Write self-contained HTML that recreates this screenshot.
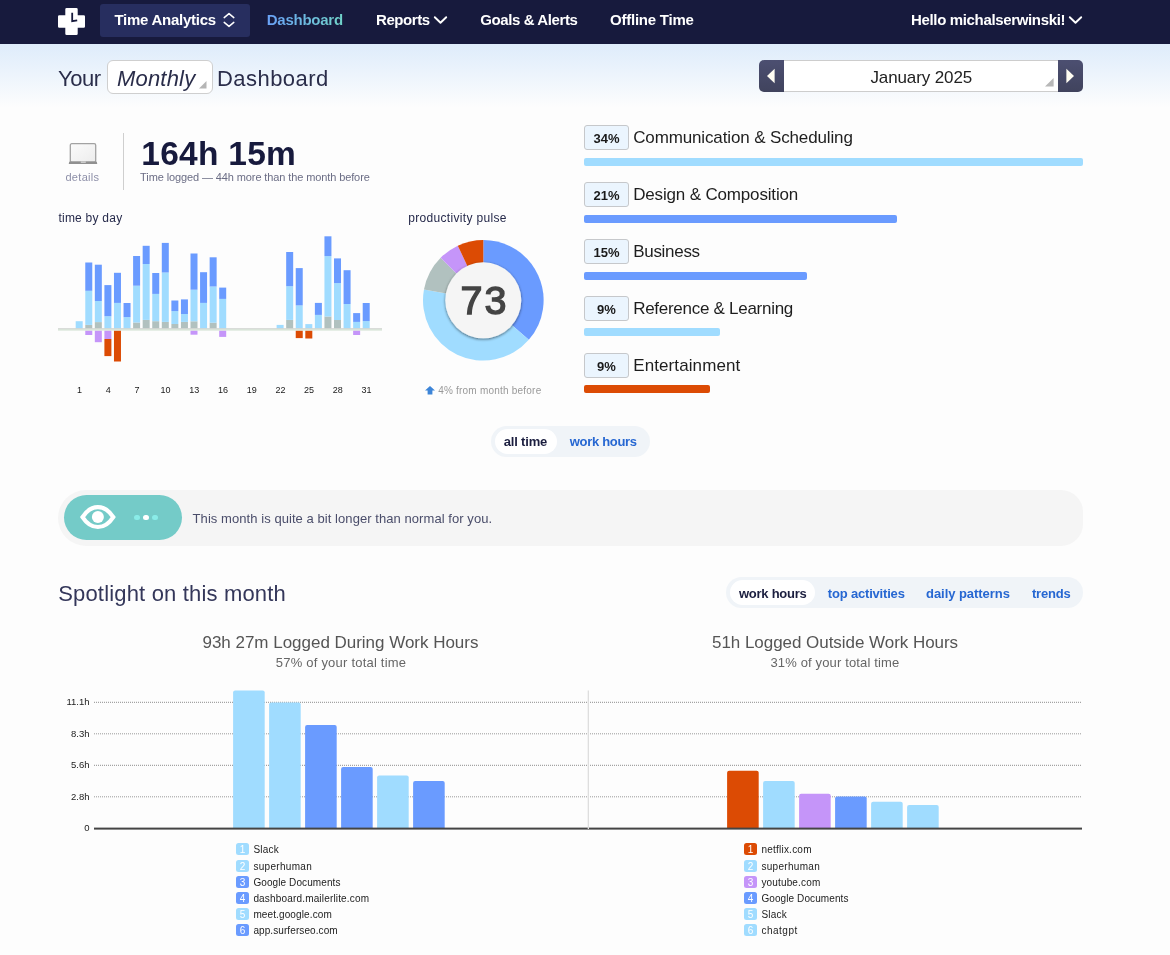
<!DOCTYPE html>
<html><head><meta charset="utf-8"><title>Dashboard</title>
<style>
html,body{margin:0;padding:0;}
body{width:1170px;height:955px;position:relative;overflow:hidden;background:#fdfdfd;font-family:"Liberation Sans",sans-serif;}
.t{position:absolute;white-space:nowrap;line-height:1;font-family:"Liberation Sans",sans-serif;}
.a{position:absolute;}
</style></head><body>

<div class="a" style="left:0;top:44px;width:1170px;height:64px;background:linear-gradient(180deg,#deecfb 0%,#fdfdfd 100%);"></div>
<div class="a" style="left:0;top:0;width:1170px;height:44px;background:#171a3d;"></div>
<div class="a" style="left:100px;top:4px;width:150px;height:33px;background:#272e5f;border-radius:3px;"></div>
<svg class="a" style="left:58px;top:8px" width="27" height="27" viewBox="0 0 27 27">
<path d="M8.6 0h9.8a1.3 1.3 0 0 1 1.3 1.3V7.3h6a1.3 1.3 0 0 1 1.3 1.3v9.8a1.3 1.3 0 0 1-1.3 1.3h-6v6a1.3 1.3 0 0 1-1.3 1.3H8.6a1.3 1.3 0 0 1-1.3-1.3v-6H1.3A1.3 1.3 0 0 1 0 18.4V8.6A1.3 1.3 0 0 1 1.3 7.3h6V1.3A1.3 1.3 0 0 1 8.6 0z" fill="#fff"/>
<path d="M14.2 4.7v8.5l5-.8" fill="none" stroke="#171a3d" stroke-width="1.8"/>
</svg>
<svg class="a" style="left:222px;top:12px" width="14" height="16" viewBox="0 0 14 16"><path d="M2.2 5.6L7 1.6l4.8 4M2.2 10.4L7 14.4l4.8-4" fill="none" stroke="#fff" stroke-width="1.5" stroke-linecap="round" stroke-linejoin="round"/></svg>
<svg class="a" style="left:433px;top:14px" width="15" height="12" viewBox="0 0 15 12"><path d="M1.8 3.2L7.5 8.8l5.7-5.6" fill="none" stroke="#fff" stroke-width="1.9" stroke-linecap="round" stroke-linejoin="round"/></svg>
<svg class="a" style="left:1068px;top:14px" width="15" height="12" viewBox="0 0 15 12"><path d="M1.8 3.2L7.5 8.8l5.7-5.6" fill="none" stroke="#fff" stroke-width="1.9" stroke-linecap="round" stroke-linejoin="round"/></svg>
<div class="a" style="left:107px;top:60px;width:106px;height:34px;box-sizing:border-box;border:1px solid #cfcfcf;border-radius:6px;background:#fff;"></div>
<svg class="a" style="left:199px;top:81px" width="8" height="8" viewBox="0 0 8 8"><path d="M7.5 0V7.5H0z" fill="#b5b5b5"/></svg>
<div class="a" style="left:759px;top:60px;width:324px;height:32px;border-radius:5px;background:linear-gradient(180deg,#4c4f71,#40435d);"></div>
<div class="a" style="left:784px;top:60px;width:274px;height:32px;box-sizing:border-box;border-top:1px solid #cdcdcd;border-bottom:1px solid #cdcdcd;background:#fff;"></div>
<svg class="a" style="left:766px;top:68px" width="10" height="16" viewBox="0 0 10 16"><path d="M8.6 0.8V15.2L1 8z" fill="#fffdf2"/></svg>
<svg class="a" style="left:1065px;top:68px" width="10" height="16" viewBox="0 0 10 16"><path d="M1.4 0.8V15.2L9 8z" fill="#fffdf2"/></svg>
<svg class="a" style="left:1045px;top:78px" width="9" height="9" viewBox="0 0 9 9"><path d="M8.6 0V8.6H0z" fill="#b8b8b8"/></svg>
<svg class="a" style="left:68px;top:142px" width="30" height="23" viewBox="0 0 30 23">
<defs><linearGradient id="lg1" x1="0" y1="0" x2="1" y2="1"><stop offset="0" stop-color="#fbfbfb"/><stop offset="1" stop-color="#ececec"/></linearGradient></defs>
<rect x="2.3" y="1.7" width="25.4" height="18.4" rx="1.5" fill="url(#lg1)" stroke="#a2a2a2" stroke-width="1.3"/>
<path d="M1.3 19.5h27.4l.5 2a.5.5 0 0 1-.5.6H1.3a.5.5 0 0 1-.5-.6z" fill="#909090"/>
<rect x="12.8" y="19.6" width="5" height="1.1" fill="#e4e4e4"/>
</svg>
<div class="a" style="left:123px;top:133px;width:1px;height:57px;background:#cfcfcf;"></div>
<svg class="a" style="left:50px;top:225px" width="350" height="150" viewBox="50 225 350 150" shape-rendering="auto">
<rect x="75.70" y="321.20" width="7" height="7.20" fill="#a0dcff"/>
<rect x="85.27" y="324.90" width="7" height="3.50" fill="#b1c1bf"/>
<rect x="85.27" y="290.80" width="7" height="34.10" fill="#a0dcff"/>
<rect x="85.27" y="262.50" width="7" height="28.30" fill="#6a9bff"/>
<rect x="85.27" y="330.60" width="7" height="4.40" fill="#c595f9"/>
<rect x="94.83" y="322.10" width="7" height="6.30" fill="#b1c1bf"/>
<rect x="94.83" y="301.00" width="7" height="21.10" fill="#a0dcff"/>
<rect x="94.83" y="264.70" width="7" height="36.30" fill="#6a9bff"/>
<rect x="94.83" y="330.60" width="7" height="11.60" fill="#c595f9"/>
<rect x="104.40" y="316.20" width="7" height="12.20" fill="#a0dcff"/>
<rect x="104.40" y="285.10" width="7" height="31.10" fill="#6a9bff"/>
<rect x="104.40" y="330.60" width="7" height="8.40" fill="#c595f9"/>
<rect x="104.40" y="339.00" width="7" height="17.10" fill="#dc4b04"/>
<rect x="113.97" y="302.90" width="7" height="25.50" fill="#a0dcff"/>
<rect x="113.97" y="272.80" width="7" height="30.10" fill="#6a9bff"/>
<rect x="113.97" y="330.60" width="7" height="30.90" fill="#dc4b04"/>
<rect x="123.53" y="317.10" width="7" height="11.30" fill="#a0dcff"/>
<rect x="123.53" y="303.00" width="7" height="14.10" fill="#6a9bff"/>
<rect x="133.10" y="322.50" width="7" height="5.90" fill="#b1c1bf"/>
<rect x="133.10" y="285.70" width="7" height="36.80" fill="#a0dcff"/>
<rect x="133.10" y="256.00" width="7" height="29.70" fill="#6a9bff"/>
<rect x="142.67" y="319.90" width="7" height="8.50" fill="#b1c1bf"/>
<rect x="142.67" y="264.00" width="7" height="55.90" fill="#a0dcff"/>
<rect x="142.67" y="245.80" width="7" height="18.20" fill="#6a9bff"/>
<rect x="152.24" y="321.20" width="7" height="7.20" fill="#b1c1bf"/>
<rect x="152.24" y="293.90" width="7" height="27.30" fill="#a0dcff"/>
<rect x="152.24" y="273.00" width="7" height="20.90" fill="#6a9bff"/>
<rect x="161.80" y="321.90" width="7" height="6.50" fill="#b1c1bf"/>
<rect x="161.80" y="272.50" width="7" height="49.40" fill="#a0dcff"/>
<rect x="161.80" y="242.90" width="7" height="29.60" fill="#6a9bff"/>
<rect x="171.37" y="324.00" width="7" height="4.40" fill="#b1c1bf"/>
<rect x="171.37" y="311.10" width="7" height="12.90" fill="#a0dcff"/>
<rect x="171.37" y="300.50" width="7" height="10.60" fill="#6a9bff"/>
<rect x="180.94" y="321.90" width="7" height="6.50" fill="#b1c1bf"/>
<rect x="180.94" y="314.00" width="7" height="7.90" fill="#a0dcff"/>
<rect x="180.94" y="299.40" width="7" height="14.60" fill="#6a9bff"/>
<rect x="190.50" y="321.30" width="7" height="7.10" fill="#b1c1bf"/>
<rect x="190.50" y="289.70" width="7" height="31.60" fill="#a0dcff"/>
<rect x="190.50" y="253.50" width="7" height="36.20" fill="#6a9bff"/>
<rect x="190.50" y="330.60" width="7" height="4.10" fill="#c595f9"/>
<rect x="200.07" y="302.90" width="7" height="25.50" fill="#a0dcff"/>
<rect x="200.07" y="272.20" width="7" height="30.70" fill="#6a9bff"/>
<rect x="209.64" y="322.70" width="7" height="5.70" fill="#b1c1bf"/>
<rect x="209.64" y="286.50" width="7" height="36.20" fill="#a0dcff"/>
<rect x="209.64" y="257.30" width="7" height="29.20" fill="#6a9bff"/>
<rect x="219.20" y="298.90" width="7" height="29.50" fill="#a0dcff"/>
<rect x="219.20" y="287.60" width="7" height="11.30" fill="#6a9bff"/>
<rect x="219.20" y="330.60" width="7" height="6.30" fill="#c595f9"/>
<rect x="276.61" y="324.90" width="7" height="3.50" fill="#a0dcff"/>
<rect x="286.17" y="319.90" width="7" height="8.50" fill="#b1c1bf"/>
<rect x="286.17" y="286.20" width="7" height="33.70" fill="#a0dcff"/>
<rect x="286.17" y="252.00" width="7" height="34.20" fill="#6a9bff"/>
<rect x="295.74" y="305.40" width="7" height="23.00" fill="#a0dcff"/>
<rect x="295.74" y="268.10" width="7" height="37.30" fill="#6a9bff"/>
<rect x="295.74" y="330.60" width="7" height="7.50" fill="#dc4b04"/>
<rect x="305.31" y="324.10" width="7" height="4.30" fill="#a0dcff"/>
<rect x="305.31" y="330.60" width="7" height="7.90" fill="#dc4b04"/>
<rect x="314.88" y="314.90" width="7" height="13.50" fill="#a0dcff"/>
<rect x="314.88" y="302.90" width="7" height="12.00" fill="#6a9bff"/>
<rect x="324.44" y="316.50" width="7" height="11.90" fill="#b1c1bf"/>
<rect x="324.44" y="256.10" width="7" height="60.40" fill="#a0dcff"/>
<rect x="324.44" y="236.30" width="7" height="19.80" fill="#6a9bff"/>
<rect x="334.01" y="320.00" width="7" height="8.40" fill="#b1c1bf"/>
<rect x="334.01" y="283.10" width="7" height="36.90" fill="#a0dcff"/>
<rect x="334.01" y="258.40" width="7" height="24.70" fill="#6a9bff"/>
<rect x="343.58" y="304.00" width="7" height="24.40" fill="#a0dcff"/>
<rect x="343.58" y="270.20" width="7" height="33.80" fill="#6a9bff"/>
<rect x="353.14" y="321.90" width="7" height="6.50" fill="#a0dcff"/>
<rect x="353.14" y="313.10" width="7" height="8.80" fill="#6a9bff"/>
<rect x="353.14" y="330.60" width="7" height="4.40" fill="#c595f9"/>
<rect x="362.71" y="321.10" width="7" height="7.30" fill="#a0dcff"/>
<rect x="362.71" y="303.00" width="7" height="18.10" fill="#6a9bff"/>
<rect x="58" y="328.3" width="324" height="1.1" fill="#c9cdc9"/><rect x="58" y="329.4" width="324" height="1.1" fill="#cfe0cf"/>
</svg>
<svg class="a" style="left:410px;top:230px" width="150" height="145" viewBox="410 230 150 145">
<defs><filter id="sh" x="-30%" y="-30%" width="160%" height="160%"><feGaussianBlur in="SourceAlpha" stdDeviation="1.6"/><feOffset dx="0" dy="0.6"/><feComponentTransfer><feFuncA type="linear" slope="0.55"/></feComponentTransfer><feMerge><feMergeNode/><feMergeNode in="SourceGraphic"/></feMerge></filter></defs>
<path d="M483.30 300.30 L483.30 240.00 A60.30 60.30 0 0 1 528.81 339.86 Z" fill="#6a9bff"/>
<path d="M483.30 300.30 L528.81 339.86 A60.30 60.30 0 0 1 423.97 289.52 Z" fill="#a0dcff"/>
<path d="M483.30 300.30 L423.97 289.52 A60.30 60.30 0 0 1 440.66 257.66 Z" fill="#b1c1bf"/>
<path d="M483.30 300.30 L440.66 257.66 A60.30 60.30 0 0 1 457.82 245.65 Z" fill="#c595f9"/>
<path d="M483.30 300.30 L457.82 245.65 A60.30 60.30 0 0 1 483.30 240.00 Z" fill="#dc4b04"/>
<circle cx="483.30" cy="300.30" r="38.00" fill="#f5f5f5" filter="url(#sh)"/>
</svg>
<svg class="a" style="left:425px;top:386px" width="10" height="9" viewBox="0 0 10 9"><path d="M5 0L10 4.6H7.4V8.6H2.6V4.6H0z" fill="#3d85d8"/></svg>
<div class="a" style="left:584px;top:125.00px;width:45px;height:25px;box-sizing:border-box;border:1px solid #c6c8cb;border-radius:3px;background:#ebf5fe;"></div>
<div class="a" style="left:584px;top:158.00px;width:499px;height:8px;border-radius:2px;background:#a0dcff;"></div>
<div class="a" style="left:584px;top:182.00px;width:45px;height:25px;box-sizing:border-box;border:1px solid #c6c8cb;border-radius:3px;background:#ebf5fe;"></div>
<div class="a" style="left:584px;top:215.00px;width:313px;height:8px;border-radius:2px;background:#6a9bff;"></div>
<div class="a" style="left:584px;top:239.00px;width:45px;height:25px;box-sizing:border-box;border:1px solid #c6c8cb;border-radius:3px;background:#ebf5fe;"></div>
<div class="a" style="left:584px;top:271.50px;width:223px;height:8px;border-radius:2px;background:#6a9bff;"></div>
<div class="a" style="left:584px;top:296.00px;width:45px;height:25px;box-sizing:border-box;border:1px solid #c6c8cb;border-radius:3px;background:#ebf5fe;"></div>
<div class="a" style="left:584px;top:328.00px;width:136px;height:8px;border-radius:2px;background:#a0dcff;"></div>
<div class="a" style="left:584px;top:353.00px;width:45px;height:25px;box-sizing:border-box;border:1px solid #c6c8cb;border-radius:3px;background:#ebf5fe;"></div>
<div class="a" style="left:584px;top:385.00px;width:126px;height:8px;border-radius:2px;background:#dc4b04;"></div>
<div class="a" style="left:491px;top:426px;width:159px;height:31px;border-radius:15.5px;background:#f0f4f8;"></div>
<div class="a" style="left:495px;top:429px;width:62px;height:25px;border-radius:12.5px;background:#fff;"></div>
<div class="a" style="left:58px;top:490px;width:1025px;height:56px;border-radius:28px 22px 22px 28px;background:#f5f5f5;"></div>
<div class="a" style="left:63.7px;top:495px;width:118.3px;height:45px;border-radius:22.5px;background:#74cbc8;"></div>
<svg class="a" style="left:78px;top:503px" width="40" height="28" viewBox="0 0 40 28">
<path d="M4.5 14.1C8.6 7.8 14 4.2 19.9 4.2S31.2 7.8 35.3 14.1C31.2 20.4 25.8 24 19.9 24S8.6 20.4 4.5 14.1z" fill="none" stroke="#fff" stroke-width="4.2" stroke-linejoin="miter" stroke-miterlimit="2"/>
<circle cx="19.9" cy="14.1" r="6" fill="#fff"/></svg>
<div class="a" style="left:133.9px;top:514.6px;width:5.8px;height:5.8px;border-radius:50%;background:#8aece8;"></div>
<div class="a" style="left:143.0px;top:514.6px;width:5.8px;height:5.8px;border-radius:50%;background:#fff;"></div>
<div class="a" style="left:152.1px;top:514.6px;width:5.8px;height:5.8px;border-radius:50%;background:#8aece8;"></div>
<div class="a" style="left:726.3px;top:577px;width:356.7px;height:31px;border-radius:15.5px;background:#f0f4f8;"></div>
<div class="a" style="left:730px;top:580.4px;width:85px;height:25px;border-radius:12.5px;background:#fff;"></div>
<svg class="a" style="left:50px;top:685px" width="1060" height="150" viewBox="50 685 1060 150">
<line x1="94" x2="1082" y1="702.3" y2="702.3" stroke="#8c8c8c" stroke-width="1" stroke-dasharray="1 1"/>
<line x1="94" x2="1082" y1="733.8" y2="733.8" stroke="#9a9a9a" stroke-width="1" stroke-dasharray="1 1"/>
<line x1="94" x2="1082" y1="765.3" y2="765.3" stroke="#8c8c8c" stroke-width="1" stroke-dasharray="1 1"/>
<line x1="94" x2="1082" y1="796.8" y2="796.8" stroke="#9a9a9a" stroke-width="1" stroke-dasharray="1 1"/>
<path d="M233.1 828.5V692.5a2 2 0 0 1 2-2h27.6a2 2 0 0 1 2 2V828.5z" fill="#a0dcff"/>
<path d="M269.1 828.5V704.6a2 2 0 0 1 2-2h27.6a2 2 0 0 1 2 2V828.5z" fill="#a0dcff"/>
<path d="M305.1 828.5V727.1a2 2 0 0 1 2-2h27.6a2 2 0 0 1 2 2V828.5z" fill="#6a9bff"/>
<path d="M341.1 828.5V769.0a2 2 0 0 1 2-2h27.6a2 2 0 0 1 2 2V828.5z" fill="#6a9bff"/>
<path d="M377.1 828.5V777.4a2 2 0 0 1 2-2h27.6a2 2 0 0 1 2 2V828.5z" fill="#a0dcff"/>
<path d="M413.1 828.5V783.1a2 2 0 0 1 2-2h27.6a2 2 0 0 1 2 2V828.5z" fill="#6a9bff"/>
<path d="M727.1 828.5V772.7a2 2 0 0 1 2-2h27.6a2 2 0 0 1 2 2V828.5z" fill="#dc4b04"/>
<path d="M763.1 828.5V783.1a2 2 0 0 1 2-2h27.6a2 2 0 0 1 2 2V828.5z" fill="#a0dcff"/>
<path d="M799.1 828.5V795.8a2 2 0 0 1 2-2h27.6a2 2 0 0 1 2 2V828.5z" fill="#c595f9"/>
<path d="M835.1 828.5V798.6a2 2 0 0 1 2-2h27.6a2 2 0 0 1 2 2V828.5z" fill="#6a9bff"/>
<path d="M871.1 828.5V803.8a2 2 0 0 1 2-2h27.6a2 2 0 0 1 2 2V828.5z" fill="#a0dcff"/>
<path d="M907.1 828.5V807.1a2 2 0 0 1 2-2h27.6a2 2 0 0 1 2 2V828.5z" fill="#a0dcff"/>
<rect x="94" y="827.6" width="988" height="2" fill="#444"/>
<rect x="587.7" y="690.5" width="1.3" height="138.5" fill="#dedede"/>
</svg>
<div class="a" style="left:236.0px;top:843.0px;width:13px;height:12px;border-radius:2.5px;background:#a0dcff;"></div>
<div class="a" style="left:236.0px;top:860.0px;width:13px;height:12px;border-radius:2.5px;background:#a0dcff;"></div>
<div class="a" style="left:236.0px;top:876.0px;width:13px;height:12px;border-radius:2.5px;background:#6a9bff;"></div>
<div class="a" style="left:236.0px;top:892.0px;width:13px;height:12px;border-radius:2.5px;background:#6a9bff;"></div>
<div class="a" style="left:236.0px;top:908.0px;width:13px;height:12px;border-radius:2.5px;background:#a0dcff;"></div>
<div class="a" style="left:236.0px;top:924.0px;width:13px;height:12px;border-radius:2.5px;background:#6a9bff;"></div>
<div class="a" style="left:744.0px;top:843.0px;width:13px;height:12px;border-radius:2.5px;background:#dc4b04;"></div>
<div class="a" style="left:744.0px;top:860.0px;width:13px;height:12px;border-radius:2.5px;background:#a0dcff;"></div>
<div class="a" style="left:744.0px;top:876.0px;width:13px;height:12px;border-radius:2.5px;background:#c595f9;"></div>
<div class="a" style="left:744.0px;top:892.0px;width:13px;height:12px;border-radius:2.5px;background:#6a9bff;"></div>
<div class="a" style="left:744.0px;top:908.0px;width:13px;height:12px;border-radius:2.5px;background:#a0dcff;"></div>
<div class="a" style="left:744.0px;top:924.0px;width:13px;height:12px;border-radius:2.5px;background:#a0dcff;"></div>
<div id="txt" style="position:absolute;left:0;top:0;width:1170px;height:955px;will-change:transform;">
<div class="t" id="n_ta" style="top:12.40px;font-size:15px;font-weight:700;color:#fff;left:114.40px;letter-spacing:-0.257px;">Time Analytics</div>
<div class="t" id="n_db" style="top:12.40px;font-size:15px;font-weight:700;color:#6fb0f0;left:266.80px;letter-spacing:-0.257px;background:linear-gradient(90deg,#6aa2f8,#70d2c8);-webkit-background-clip:text;background-clip:text;color:transparent;">Dashboard</div>
<div class="t" id="n_rp" style="top:12.40px;font-size:15px;font-weight:700;color:#fff;left:376.00px;letter-spacing:-0.431px;">Reports</div>
<div class="t" id="n_ga" style="top:12.40px;font-size:15px;font-weight:700;color:#fff;left:480.20px;letter-spacing:-0.393px;">Goals &amp; Alerts</div>
<div class="t" id="n_ot" style="top:12.40px;font-size:15px;font-weight:700;color:#fff;left:610.00px;letter-spacing:-0.228px;">Offline Time</div>
<div class="t" id="n_hi" style="top:12.40px;font-size:15px;font-weight:700;color:#fff;left:911.00px;letter-spacing:-0.344px;">Hello michalserwinski!</div>
<div class="t" id="h_your" style="top:67.88px;font-size:22px;font-weight:400;color:#2a2d4a;left:58.00px;letter-spacing:-0.418px;">Your</div>
<div class="t" id="h_mon" style="top:67.88px;font-size:22px;font-weight:400;color:#2a2d4a;left:117.00px;letter-spacing:0.192px;font-style:italic;">Monthly</div>
<div class="t" id="h_dash" style="top:67.88px;font-size:22px;font-weight:400;color:#2a2d4a;left:217.00px;letter-spacing:0.445px;">Dashboard</div>
<div class="t" id="h_date" style="top:69.11px;font-size:17px;font-weight:400;color:#222;left:870.40px;letter-spacing:-0.103px;">January 2025</div>
<div class="t" id="s_det" style="top:171.69px;font-size:11px;font-weight:400;color:#8d8fa8;left:65.40px;letter-spacing:0.317px;">details</div>
<div class="t" id="s_big" style="top:136.84px;font-size:33.5px;font-weight:700;color:#171a3d;left:141.30px;letter-spacing:0.262px;">164h 15m</div>
<div class="t" id="s_sub" style="top:171.69px;font-size:11px;font-weight:400;color:#6b6d85;left:140.10px;letter-spacing:-0.109px;">Time logged — 44h more than the month before</div>
<div class="t" id="s_tbd" style="top:212.34px;font-size:12px;font-weight:400;color:#262a4b;left:58.40px;letter-spacing:0.244px;">time by day</div>
<div class="t" id="s_pp" style="top:212.34px;font-size:12px;font-weight:400;color:#262a4b;left:408.20px;letter-spacing:0.322px;">productivity pulse</div>
<div class="t" id="s_73" style="top:281.16px;font-size:39.5px;font-weight:400;color:#444;left:484.40px;transform:translateX(-50%);letter-spacing:2px;-webkit-text-stroke:1.4px #444;">73</div>
<div class="t" id="s_4p" style="top:386.44px;font-size:10px;font-weight:400;color:#999;left:438.20px;letter-spacing:0.214px;">4% from month before</div>
<div class="t" id="d1" style="top:386.38px;font-size:9px;font-weight:400;color:#1a1a1a;left:79.50px;transform:translateX(-50%);">1</div>
<div class="t" id="d4" style="top:386.38px;font-size:9px;font-weight:400;color:#1a1a1a;left:108.20px;transform:translateX(-50%);">4</div>
<div class="t" id="d7" style="top:386.38px;font-size:9px;font-weight:400;color:#1a1a1a;left:136.90px;transform:translateX(-50%);">7</div>
<div class="t" id="d10" style="top:386.38px;font-size:9px;font-weight:400;color:#1a1a1a;left:165.60px;transform:translateX(-50%);">10</div>
<div class="t" id="d13" style="top:386.38px;font-size:9px;font-weight:400;color:#1a1a1a;left:194.30px;transform:translateX(-50%);">13</div>
<div class="t" id="d16" style="top:386.38px;font-size:9px;font-weight:400;color:#1a1a1a;left:223.00px;transform:translateX(-50%);">16</div>
<div class="t" id="d19" style="top:386.38px;font-size:9px;font-weight:400;color:#1a1a1a;left:251.71px;transform:translateX(-50%);">19</div>
<div class="t" id="d22" style="top:386.38px;font-size:9px;font-weight:400;color:#1a1a1a;left:280.41px;transform:translateX(-50%);">22</div>
<div class="t" id="d25" style="top:386.38px;font-size:9px;font-weight:400;color:#1a1a1a;left:309.11px;transform:translateX(-50%);">25</div>
<div class="t" id="d28" style="top:386.38px;font-size:9px;font-weight:400;color:#1a1a1a;left:337.81px;transform:translateX(-50%);">28</div>
<div class="t" id="d31" style="top:386.38px;font-size:9px;font-weight:400;color:#1a1a1a;left:366.51px;transform:translateX(-50%);">31</div>
<div class="t" id="c_p0" style="top:132.20px;font-size:13px;font-weight:700;color:#1a1a1a;left:606.50px;transform:translateX(-50%);">34%</div>
<div class="t" id="c_n0" style="top:128.71px;font-size:17px;font-weight:400;color:#1e1e1e;left:633.20px;letter-spacing:-0.133px;">Communication &amp; Scheduling</div>
<div class="t" id="c_p1" style="top:189.20px;font-size:13px;font-weight:700;color:#1a1a1a;left:606.50px;transform:translateX(-50%);">21%</div>
<div class="t" id="c_n1" style="top:185.71px;font-size:17px;font-weight:400;color:#1e1e1e;left:633.20px;letter-spacing:-0.163px;">Design &amp; Composition</div>
<div class="t" id="c_p2" style="top:246.20px;font-size:13px;font-weight:700;color:#1a1a1a;left:606.50px;transform:translateX(-50%);">15%</div>
<div class="t" id="c_n2" style="top:242.71px;font-size:17px;font-weight:400;color:#1e1e1e;left:633.20px;letter-spacing:-0.298px;">Business</div>
<div class="t" id="c_p3" style="top:303.20px;font-size:13px;font-weight:700;color:#1a1a1a;left:606.50px;transform:translateX(-50%);">9%</div>
<div class="t" id="c_n3" style="top:299.71px;font-size:17px;font-weight:400;color:#1e1e1e;left:633.20px;letter-spacing:-0.278px;">Reference &amp; Learning</div>
<div class="t" id="c_p4" style="top:360.20px;font-size:13px;font-weight:700;color:#1a1a1a;left:606.50px;transform:translateX(-50%);">9%</div>
<div class="t" id="c_n4" style="top:356.71px;font-size:17px;font-weight:400;color:#1e1e1e;left:633.20px;letter-spacing:0.105px;">Entertainment</div>
<div class="t" id="t_all" style="top:435.00px;font-size:13px;font-weight:700;color:#1b1e3f;left:503.80px;letter-spacing:-0.185px;">all time</div>
<div class="t" id="t_wh" style="top:435.00px;font-size:13px;font-weight:700;color:#2667d2;left:569.80px;letter-spacing:-0.309px;">work hours</div>
<div class="t" id="i_txt" style="top:511.70px;font-size:13px;font-weight:400;color:#4a4d6a;left:192.60px;letter-spacing:0.062px;">This month is quite a bit longer than normal for you.</div>
<div class="t" id="sp_t" style="top:583.18px;font-size:22px;font-weight:400;color:#34375a;left:58.20px;letter-spacing:0.172px;">Spotlight on this month</div>
<div class="t" id="tb_wh" style="top:587.00px;font-size:13px;font-weight:700;color:#1b1e3f;left:739.00px;letter-spacing:-0.264px;">work hours</div>
<div class="t" id="tb_ta" style="top:587.00px;font-size:13px;font-weight:700;color:#2667d2;left:827.80px;letter-spacing:-0.182px;">top activities</div>
<div class="t" id="tb_dp" style="top:587.00px;font-size:13px;font-weight:700;color:#2667d2;left:926.00px;letter-spacing:-0.049px;">daily patterns</div>
<div class="t" id="tb_tr" style="top:587.00px;font-size:13px;font-weight:700;color:#2667d2;left:1032.00px;letter-spacing:-0.207px;">trends</div>
<div class="t" id="ch_l1" style="top:634.21px;font-size:17px;font-weight:400;color:#555;left:202.50px;letter-spacing:-0.021px;">93h 27m Logged During Work Hours</div>
<div class="t" id="ch_l2" style="top:656.30px;font-size:13px;font-weight:400;color:#666;left:275.80px;letter-spacing:0.217px;">57% of your total time</div>
<div class="t" id="ch_r1" style="top:634.21px;font-size:17px;font-weight:400;color:#555;left:712.00px;letter-spacing:-0.042px;">51h Logged Outside Work Hours</div>
<div class="t" id="ch_r2" style="top:656.30px;font-size:13px;font-weight:400;color:#666;left:770.40px;letter-spacing:0.151px;">31% of your total time</div>
<div class="t" id="y_11_1h" style="top:697.06px;font-size:9.5px;font-weight:400;color:#222;right:1080.50px;">11.1h</div>
<div class="t" id="y_8_3h" style="top:728.56px;font-size:9.5px;font-weight:400;color:#222;right:1080.50px;">8.3h</div>
<div class="t" id="y_5_6h" style="top:760.06px;font-size:9.5px;font-weight:400;color:#222;right:1080.50px;">5.6h</div>
<div class="t" id="y_2_8h" style="top:791.56px;font-size:9.5px;font-weight:400;color:#222;right:1080.50px;">2.8h</div>
<div class="t" id="y_0" style="top:822.96px;font-size:9.5px;font-weight:400;color:#222;right:1080.50px;">0</div>
<div class="t" id="lgL0" style="top:844.93px;font-size:10px;font-weight:400;color:#222;left:253.40px;letter-spacing:0.200px;">Slack</div>
<div class="t" id="lgnL0" style="top:844.53px;font-size:10px;font-weight:400;color:#fff;left:242.50px;transform:translateX(-50%);">1</div>
<div class="t" id="lgL1" style="top:861.53px;font-size:10px;font-weight:400;color:#222;left:253.40px;letter-spacing:0.311px;">superhuman</div>
<div class="t" id="lgnL1" style="top:861.53px;font-size:10px;font-weight:400;color:#fff;left:242.50px;transform:translateX(-50%);">2</div>
<div class="t" id="lgL2" style="top:877.53px;font-size:10px;font-weight:400;color:#222;left:253.40px;letter-spacing:0.100px;">Google Documents</div>
<div class="t" id="lgnL2" style="top:877.53px;font-size:10px;font-weight:400;color:#fff;left:242.50px;transform:translateX(-50%);">3</div>
<div class="t" id="lgL3" style="top:893.53px;font-size:10px;font-weight:400;color:#222;left:253.40px;letter-spacing:0.170px;">dashboard.mailerlite.com</div>
<div class="t" id="lgnL3" style="top:893.53px;font-size:10px;font-weight:400;color:#fff;left:242.50px;transform:translateX(-50%);">4</div>
<div class="t" id="lgL4" style="top:909.53px;font-size:10px;font-weight:400;color:#222;left:253.40px;letter-spacing:0.121px;">meet.google.com</div>
<div class="t" id="lgnL4" style="top:909.53px;font-size:10px;font-weight:400;color:#fff;left:242.50px;transform:translateX(-50%);">5</div>
<div class="t" id="lgL5" style="top:925.53px;font-size:10px;font-weight:400;color:#222;left:253.40px;letter-spacing:0.088px;">app.surferseo.com</div>
<div class="t" id="lgnL5" style="top:925.53px;font-size:10px;font-weight:400;color:#fff;left:242.50px;transform:translateX(-50%);">6</div>
<div class="t" id="lgR0" style="top:844.93px;font-size:10px;font-weight:400;color:#222;left:761.40px;letter-spacing:0.230px;">netflix.com</div>
<div class="t" id="lgnR0" style="top:844.53px;font-size:10px;font-weight:400;color:#fff;left:750.50px;transform:translateX(-50%);">1</div>
<div class="t" id="lgR1" style="top:861.53px;font-size:10px;font-weight:400;color:#222;left:761.40px;letter-spacing:0.311px;">superhuman</div>
<div class="t" id="lgnR1" style="top:861.53px;font-size:10px;font-weight:400;color:#fff;left:750.50px;transform:translateX(-50%);">2</div>
<div class="t" id="lgR2" style="top:877.53px;font-size:10px;font-weight:400;color:#222;left:761.40px;letter-spacing:0.160px;">youtube.com</div>
<div class="t" id="lgnR2" style="top:877.53px;font-size:10px;font-weight:400;color:#fff;left:750.50px;transform:translateX(-50%);">3</div>
<div class="t" id="lgR3" style="top:893.53px;font-size:10px;font-weight:400;color:#222;left:761.40px;letter-spacing:0.100px;">Google Documents</div>
<div class="t" id="lgnR3" style="top:893.53px;font-size:10px;font-weight:400;color:#fff;left:750.50px;transform:translateX(-50%);">4</div>
<div class="t" id="lgR4" style="top:909.53px;font-size:10px;font-weight:400;color:#222;left:761.40px;letter-spacing:0.200px;">Slack</div>
<div class="t" id="lgnR4" style="top:909.53px;font-size:10px;font-weight:400;color:#fff;left:750.50px;transform:translateX(-50%);">5</div>
<div class="t" id="lgR5" style="top:925.53px;font-size:10px;font-weight:400;color:#222;left:761.40px;letter-spacing:0.517px;">chatgpt</div>
<div class="t" id="lgnR5" style="top:925.53px;font-size:10px;font-weight:400;color:#fff;left:750.50px;transform:translateX(-50%);">6</div>
</div>
</body></html>
